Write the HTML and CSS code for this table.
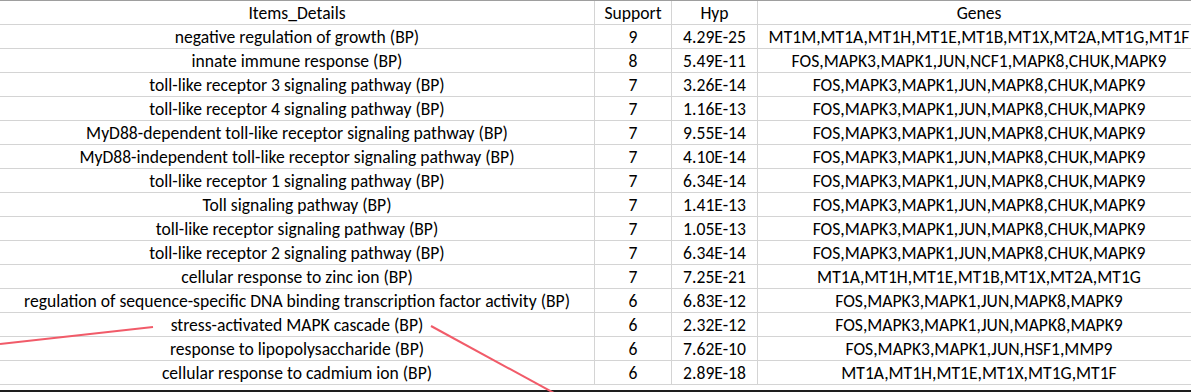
FILE: index.html
```html
<!DOCTYPE html>
<html>
<head>
<meta charset="utf-8">
<link rel="stylesheet" href="styles.css">
</head>
<body>
<div class="sheet">
  <table class="grid">
    <colgroup>
      <col class="c-item"><col class="c-sup"><col class="c-hyp"><col class="c-genes">
    </colgroup>
    <thead>
      <tr><th>Items_Details</th><th>Support</th><th>Hyp</th><th>Genes</th></tr>
    </thead>
    <tbody>
      <tr><td>negative regulation of growth (BP)</td><td>9</td><td>4.29E-25</td><td>MT1M,MT1A,MT1H,MT1E,MT1B,MT1X,MT2A,MT1G,MT1F</td></tr>
      <tr><td>innate immune response (BP)</td><td>8</td><td>5.49E-11</td><td>FOS,MAPK3,MAPK1,JUN,NCF1,MAPK8,CHUK,MAPK9</td></tr>
      <tr><td>toll-like receptor 3 signaling pathway (BP)</td><td>7</td><td>3.26E-14</td><td>FOS,MAPK3,MAPK1,JUN,MAPK8,CHUK,MAPK9</td></tr>
      <tr><td>toll-like receptor 4 signaling pathway (BP)</td><td>7</td><td>1.16E-13</td><td>FOS,MAPK3,MAPK1,JUN,MAPK8,CHUK,MAPK9</td></tr>
      <tr><td>MyD88-dependent toll-like receptor signaling pathway (BP)</td><td>7</td><td>9.55E-14</td><td>FOS,MAPK3,MAPK1,JUN,MAPK8,CHUK,MAPK9</td></tr>
      <tr><td>MyD88-independent toll-like receptor signaling pathway (BP)</td><td>7</td><td>4.10E-14</td><td>FOS,MAPK3,MAPK1,JUN,MAPK8,CHUK,MAPK9</td></tr>
      <tr><td>toll-like receptor 1 signaling pathway (BP)</td><td>7</td><td>6.34E-14</td><td>FOS,MAPK3,MAPK1,JUN,MAPK8,CHUK,MAPK9</td></tr>
      <tr><td>Toll signaling pathway (BP)</td><td>7</td><td>1.41E-13</td><td>FOS,MAPK3,MAPK1,JUN,MAPK8,CHUK,MAPK9</td></tr>
      <tr><td>toll-like receptor signaling pathway (BP)</td><td>7</td><td>1.05E-13</td><td>FOS,MAPK3,MAPK1,JUN,MAPK8,CHUK,MAPK9</td></tr>
      <tr><td>toll-like receptor 2 signaling pathway (BP)</td><td>7</td><td>6.34E-14</td><td>FOS,MAPK3,MAPK1,JUN,MAPK8,CHUK,MAPK9</td></tr>
      <tr><td>cellular response to zinc ion (BP)</td><td>7</td><td>7.25E-21</td><td>MT1A,MT1H,MT1E,MT1B,MT1X,MT2A,MT1G</td></tr>
      <tr><td>regulation of sequence-specific DNA binding transcription factor activity (BP)</td><td>6</td><td>6.83E-12</td><td>FOS,MAPK3,MAPK1,JUN,MAPK8,MAPK9</td></tr>
      <tr><td>stress-activated MAPK cascade (BP)</td><td>6</td><td>2.32E-12</td><td>FOS,MAPK3,MAPK1,JUN,MAPK8,MAPK9</td></tr>
      <tr><td>response to lipopolysaccharide (BP)</td><td>6</td><td>7.62E-10</td><td>FOS,MAPK3,MAPK1,JUN,HSF1,MMP9</td></tr>
      <tr><td>cellular response to cadmium ion (BP)</td><td>6</td><td>2.89E-18</td><td>MT1A,MT1H,MT1E,MT1X,MT1G,MT1F</td></tr>
    </tbody>
  </table>
  <div class="bottom-bar"></div>
  <svg class="annot" width="1191" height="392" viewBox="0 0 1191 392">
    <line x1="0" y1="344" x2="153" y2="327" stroke="#f15b69" stroke-width="2"/>
    <line x1="431" y1="326" x2="554" y2="393" stroke="#f15b69" stroke-width="2"/>
  </svg>
</div>
</body>
</html>
```
FILE: styles.css
```css
html, body {
  margin: 0;
  padding: 0;
  background: #fff;
  overflow: hidden;
}
.sheet {
  position: relative;
  width: 1191px;
  height: 392px;
  overflow: hidden;
  border-top: 1px solid #9e9e9e;
  box-sizing: border-box;
}
.grid {
  table-layout: fixed;
  border-collapse: separate;
  border-spacing: 0;
  width: 1200px;
  font-family: Carlito, Calibri, "Open Sans", sans-serif;
  font-size: 17.6px;
  color: #000;
}
.c-item { width: 595px; }
.c-sup { width: 77px; }
.c-hyp { width: 86px; }
.c-genes { width: 442px; }
.grid th, .grid td {
  height: 24px;
  box-sizing: border-box;
  padding: 1px 0 0;
  border-right: 1px solid #d4d4d4;
  border-bottom: 1px solid #d4d4d4;
  text-align: center;
  vertical-align: top;
  white-space: nowrap;
  overflow: hidden;
  font-weight: normal;
  line-height: 22px;
}
.grid th:last-child, .grid td:last-child {
  border-right: none;
}
.bottom-bar {
  margin-top: 5px;
  height: 2px;
  background: #1e1e1e;
}
.annot {
  position: absolute;
  left: 0;
  top: -1px;
  pointer-events: none;
}
```
